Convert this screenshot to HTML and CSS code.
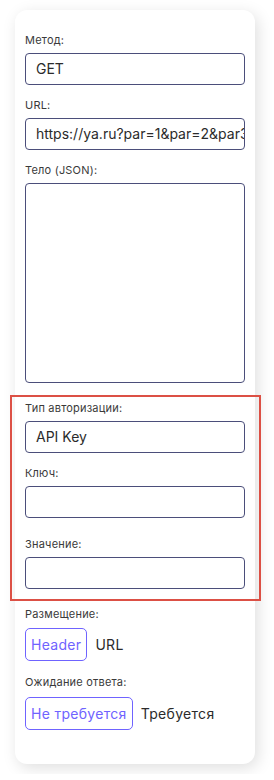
FILE: index.html
```html
<!DOCTYPE html>
<html lang="ru">
<head>
  <meta charset="UTF-8" />
  <meta name="viewport" content="width=device-width, initial-scale=1.0" />
  <title>Запрос</title>
  <link rel="stylesheet" href="styles.css">
</head>
<body>
  <div class="card">
    <div class="field">
      <label class="label">Метод:</label>
      <div class="input">GET</div>
    </div>
    <div class="field">
      <label class="label">URL:</label>
      <div class="input">https://ya.ru?par=1&amp;par=2&amp;par3=</div>
    </div>
    <div class="field">
      <label class="label">Тело (JSON):</label>
      <div class="input textarea"></div>
    </div>

    <div class="auth-group">
      <div class="highlight"></div>
      <div class="field">
        <label class="label">Тип авторизации:</label>
        <div class="input">API Key</div>
      </div>
      <div class="field">
        <label class="label">Ключ:</label>
        <div class="input"></div>
      </div>
      <div class="field field-spaced">
        <label class="label">Значение:</label>
        <div class="input"></div>
      </div>
    </div>

    <div class="field field-after">
      <label class="label">Размещение:</label>
      <div class="toggle">
        <button class="option active">Header</button>
        <button class="option">URL</button>
      </div>
    </div>
    <div class="field field-toggle">
      <label class="label">Ожидание ответа:</label>
      <div class="toggle">
        <button class="option active">Не требуется</button>
        <button class="option">Требуется</button>
      </div>
    </div>
  </div>
</body>
</html>
```

FILE: styles.css
```css
body {
  margin: 0;
  padding: 10px 15px;
  background: #fff;
  font-family: Inter, 'Noto Sans', sans-serif;
  color: #2b2b2b;
}
.card {
  width: 240px;
  box-sizing: border-box;
  padding: 23px 10px 34px;
  background: #fff;
  border-radius: 12px;
  box-shadow: 3px 4px 16px rgba(0, 0, 0, 0.13);
  display: flex;
  flex-direction: column;
  gap: 13px;
}
.field {
  display: flex;
  flex-direction: column;
}
.label {
  font-size: 11px;
  line-height: 14px;
  letter-spacing: 0.2px;
  color: #3a3a3a;
  margin-bottom: 6px;
}
.input {
  height: 32px;
  box-sizing: border-box;
  border: 1px solid #4b4e7a;
  border-radius: 4px;
  padding: 0 10px;
  font-size: 14px;
  line-height: 30px;
  white-space: nowrap;
  overflow: hidden;
}
.textarea {
  height: 200px;
}
.auth-group {
  position: relative;
  display: flex;
  flex-direction: column;
  gap: 13px;
  padding-top: 5px;
}
.field-spaced {
  margin-top: 6px;
}
.highlight {
  position: absolute;
  top: -1px;
  bottom: -12px;
  left: -15px;
  right: -16px;
  border: 2px solid #dc5045;
  pointer-events: none;
}
.field-after {
  margin-top: 5px;
}
.field-after .label {
  margin-bottom: 7px;
}
.field-toggle {
  margin-top: 1px;
}
.field-toggle .label {
  margin-bottom: 8px;
}
.toggle {
  display: flex;
  gap: 2px;
}
.option {
  height: 33px;
  padding: 0 5px;
  border: 1px solid transparent;
  border-radius: 5px;
  background: none;
  font-family: inherit;
  font-size: 14px;
  letter-spacing: 0.3px;
  color: #2b2b2b;
  cursor: pointer;
}
.option.active {
  border-color: #6f63ff;
  color: #6f63ff;
}
```
